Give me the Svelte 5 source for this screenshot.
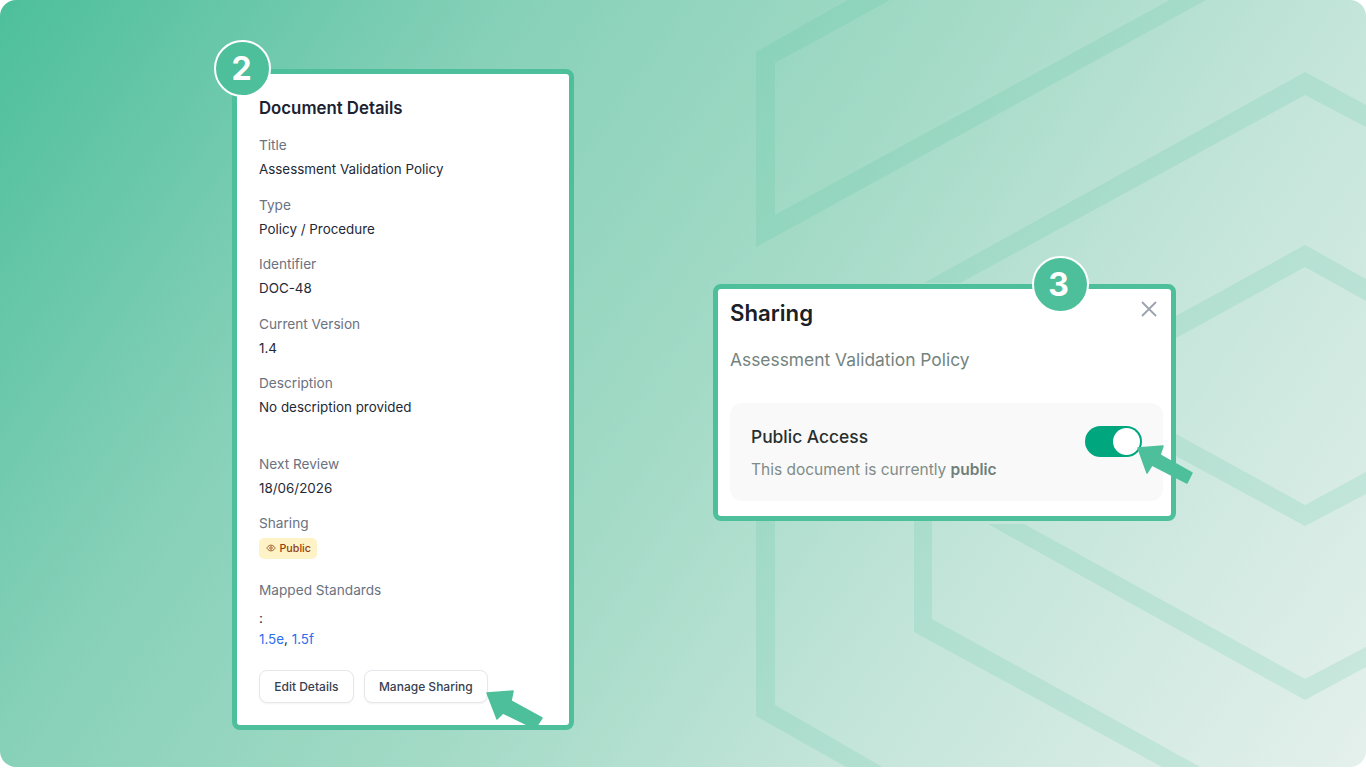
<script>
  const fields = [
    { label: 'Title', value: 'Assessment Validation Policy' },
    { label: 'Type', value: 'Policy / Procedure' },
    { label: 'Identifier', value: 'DOC-48' },
    { label: 'Current Version', value: '1.4' },
    { label: 'Description', value: 'No description provided' }
  ];
  // hexagon strokes: each is a polygon of outer and inner edge
  const shapes = [
    '756,52 848,0 890,0 775,63 775,215 1170,0 1206,0 756,247',
    '924,283 1305,72 1366,105 1366,127 1305,95 960,283',
    '1176,316 1305,245 1366,279 1366,301 1305,267 1176,338',
    '1176,434 1305,505 1366,472 1366,494 1305,526 1176,456',
    '1024,524 1305,679 1366,647 1366,667 1305,700 988,524',
    '756,521 775,521 775,705 884,768 848,768 756,716',
    '914,521 932,521 932,619 1202,768 1164,768 914,632'
  ];
</script>

<main class="stage">
  <svg class="hexes" viewBox="0 0 1366 768" aria-hidden="true">
    {#each shapes as p}
      <polygon points={p} />
    {/each}
  </svg>

  <section class="card details">
    <span class="step step-two">2</span>
    <h2>Document Details</h2>
    {#each fields as f}
      <div class="field">
        <div class="label">{f.label}</div>
        <div class="value">{f.value}</div>
      </div>
    {/each}
    <div class="field after-gap">
      <div class="label">Next Review</div>
      <div class="value">18/06/2026</div>
    </div>
    <div class="field sharing">
      <div class="label">Sharing</div>
      <span class="pill">
        <svg viewBox="0 0 24 24" width="10" height="10" fill="none" stroke="currentColor" stroke-width="2">
          <path d="M2 12s3.6-7 10-7 10 7 10 7-3.6 7-10 7-10-7-10-7z" />
          <circle cx="12" cy="12" r="3" />
        </svg>
        Public
      </span>
    </div>
    <div class="label mapped">Mapped Standards</div>
    <div class="value colon">:</div>
    <div class="value links"><a href="#a">1.5e</a>, <a href="#b">1.5f</a></div>
    <div class="actions">
      <button>Edit Details</button>
      <button>Manage Sharing</button>
    </div>
    <svg class="arrow arrow-one" viewBox="0 0 58 40" width="58" height="40" aria-hidden="true">
      <path d="M1 3 L27 1 L25 11 L56 28 L50 37 L46 37 L17 23 L11 29 Z" stroke-linejoin="round" stroke-width="1.5" />
    </svg>
  </section>

  <section class="card dialog">
    <span class="step step-three">3</span>
    <header>
      <h3>Sharing</h3>
      <svg class="close" viewBox="0 0 16 16" width="16" height="16" fill="none" stroke="currentColor" stroke-width="1.8">
        <path d="M1 1l14 14M15 1L1 15" />
      </svg>
    </header>
    <p class="sub">Assessment Validation Policy</p>
    <div class="panel">
      <div>
        <div class="access">Public Access</div>
        <div class="state">This document is currently <b>public</b></div>
      </div>
      <span class="toggle"><span class="knob"></span></span>
    </div>
    <svg class="arrow arrow-two" viewBox="0 0 58 40" width="58" height="40" aria-hidden="true">
      <path d="M1 3 L26 1 L23 10 L55 28 L50 38 L15 20 L10 28 Z" stroke-linejoin="round" stroke-width="1.5" />
    </svg>
  </section>
</main>

<style>
  :global(body) {
    margin: 0;
    background: #fff;
  }
  .stage {
    position: relative;
    box-sizing: border-box;
    width: 1366px;
    height: 767px;
    overflow: hidden;
    border-radius: 16px;
    padding: 69px 0 0 232px;
    display: flex;
    align-items: flex-start;
    gap: 139px;
    background: linear-gradient(125deg, #4dbf9b 0%, #88d1b9 28%, #a2dac6 50%, #c4e5da 72%, #e4f0ec 100%);
    font-family: Inter, "Liberation Sans", sans-serif;
  }
  .hexes {
    position: absolute;
    inset: 0;
    width: 1366px;
    height: 768px;
  }
  .hexes polygon {
    fill: #4dbf9b;
    fill-opacity: 0.16;
  }
  .card {
    position: relative;
    box-sizing: border-box;
    background: #fff;
    border: 5px solid #4dbf9b;
    border-radius: 8px;
  }
  .details {
    width: 342px;
    height: 661px;
    padding: 23px 22px 0;
  }
  h2 {
    margin: 0 0 16px;
    font-size: 16.8px;
    line-height: 22px;
    font-weight: 600;
    color: #1a2233;
  }
  .field {
    margin-bottom: 15.5px;
  }
  .label {
    font-size: 13.65px;
    line-height: 20px;
    margin-bottom: 4px;
    color: #6b7280;
  }
  .value {
    font-size: 13.4px;
    line-height: 20px;
    color: #1f2937;
  }
  .after-gap {
    margin-top: 36.5px;
  }
  .sharing {
    margin-bottom: 21.5px;
  }
  .pill {
    display: inline-flex;
    align-items: center;
    gap: 4px;
    height: 21px;
    padding: 0 6.5px;
    border-radius: 5px;
    background: #fef3c7;
    color: #92400e;
    font-size: 10.7px;
    font-weight: 500;
  }
  .mapped {
    margin-bottom: 8px;
  }
  .links {
    margin-top: 1px;
  }
  a {
    color: #2b6ff0;
    text-decoration: none;
  }
  .actions {
    display: flex;
    gap: 10px;
    margin-top: 21px;
  }
  button {
    height: 33px;
    padding: 0 14.25px;
    background: #fff;
    border: 1px solid #e5e7eb;
    border-radius: 8px;
    box-shadow: 0 1px 2px rgba(0, 0, 0, 0.05);
    font: 500 12px Inter, "Liberation Sans", sans-serif;
    color: #374151;
  }
  .step {
    position: absolute;
    box-sizing: border-box;
    width: 57px;
    height: 57px;
    padding-right: 2px;
    display: flex;
    align-items: center;
    justify-content: center;
    border: 2px solid #fff;
    border-radius: 50%;
    background: #4dbf9b;
    color: #fff;
    font-size: 32px;
    font-weight: 700;
  }
  .step-two {
    left: -23px;
    top: -34px;
  }
  .step-three {
    left: 314px;
    top: -33px;
    padding-right: 4px;
  }
  .arrow {
    position: absolute;
  }
  .arrow path {
    fill: #4dbf9b;
    stroke: #4dbf9b;
  }
  .arrow-one {
    left: 249px;
    top: 616px;
  }
  .arrow-two {
    left: 419px;
    top: 156px;
  }
  .dialog {
    width: 463px;
    height: 237px;
    margin-top: 215px;
    padding: 0 8px 0 12px;
  }
  header {
    display: flex;
    justify-content: space-between;
    align-items: flex-start;
  }
  h3 {
    margin: 9px 0 0;
    font-size: 22.2px;
    line-height: 30px;
    font-weight: 600;
    color: #1a2026;
  }
  .close {
    margin: 12px 6px 0 0;
    color: #9ca3af;
  }
  .sub {
    margin: 20px 0 0;
    font-size: 17.4px;
    line-height: 24px;
    color: #75847f;
  }
  .panel {
    display: flex;
    justify-content: space-between;
    align-items: flex-start;
    margin-top: 31px;
    box-sizing: border-box;
    height: 98px;
    padding: 21px 21px 0 21px;
    border-radius: 12px;
    background: #f9f9f9;
  }
  .access {
    font-size: 17.4px;
    line-height: 26px;
    font-weight: 500;
    color: #27302f;
  }
  .state {
    margin-top: 9px;
    font-size: 15.5px;
    line-height: 22px;
    color: #7f8c88;
  }
  .state b {
    font-weight: 600;
    color: #6f7f7a;
  }
  .toggle {
    display: flex;
    justify-content: flex-end;
    align-items: center;
    box-sizing: border-box;
    width: 57px;
    height: 31px;
    margin-top: 2px;
    padding: 2px;
    border-radius: 16px;
    background: #00a67e;
  }
  .knob {
    width: 27px;
    height: 27px;
    border-radius: 50%;
    background: #fff;
  }
</style>
